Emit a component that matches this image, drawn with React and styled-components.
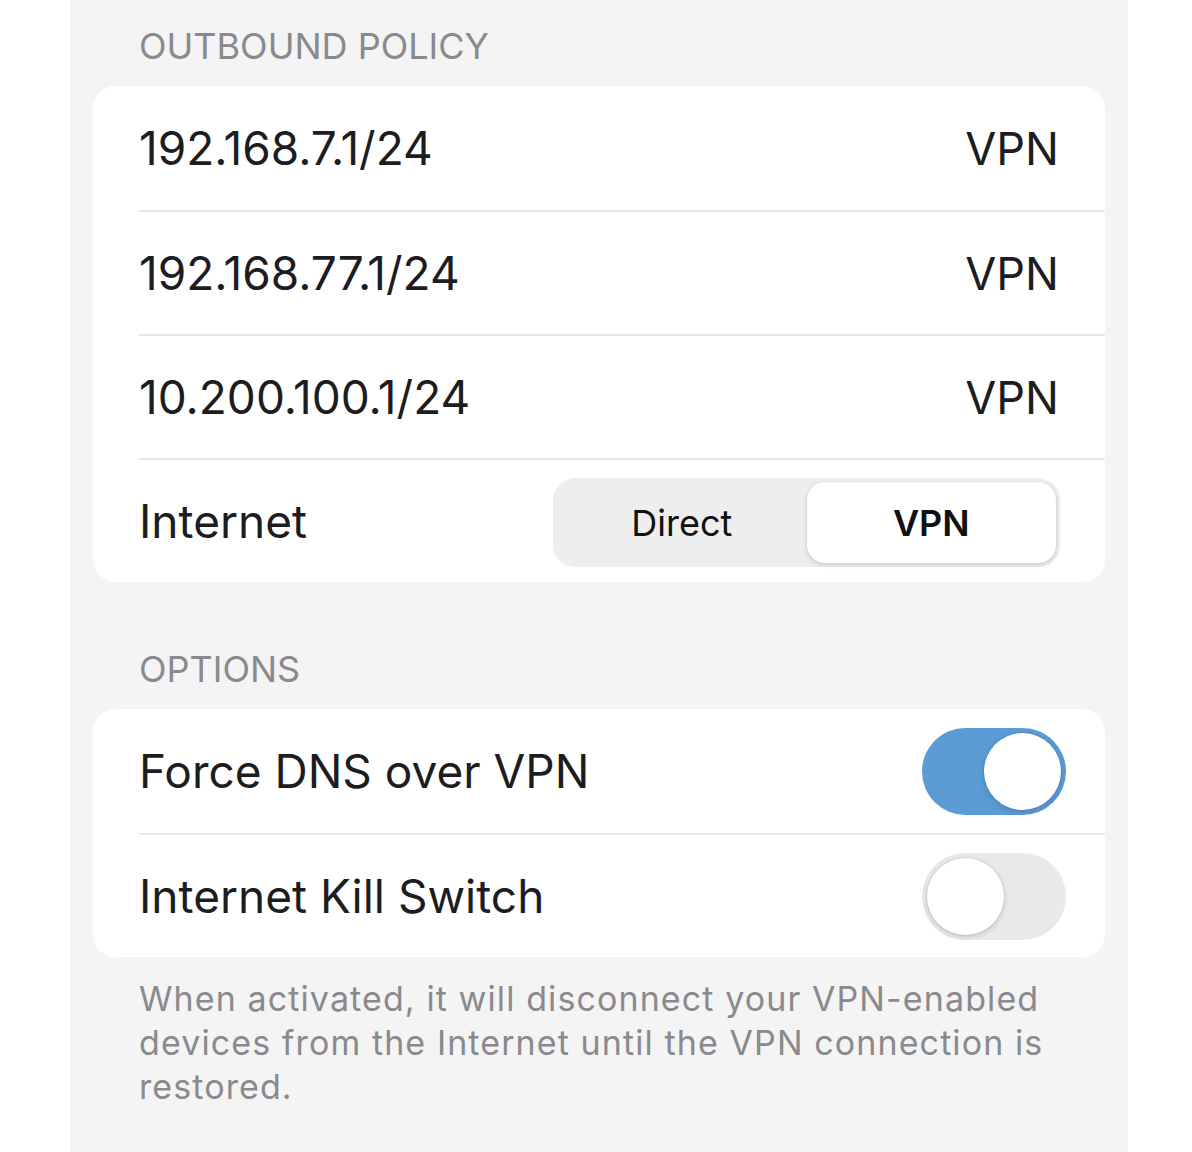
import React, { useState } from 'react';
import styled, { createGlobalStyle } from 'styled-components';

const GlobalStyle = createGlobalStyle`
  html, body {
    margin: 0;
    padding: 0;
    background: #ffffff;
  }
  body {
    font-family: Inter, "Liberation Sans", Arial, sans-serif;
    -webkit-font-smoothing: antialiased;
  }
`;

const Page = styled.div`
  width: 1058px;
  min-height: 1152px;
  margin-left: 70px;
  background-color: #f4f4f4;
  padding: 24px 23px 0;
  box-sizing: border-box;
`;

const SectionHeader = styled.div`
  font-size: 36px;
  line-height: 44px;
  color: #8a8a8e;
  text-transform: uppercase;
  padding-left: 46px;
  margin-bottom: 18px;
  margin-top: ${p => (p.$first ? '0' : '65px')};
`;

const Card = styled.div`
  background-color: #ffffff;
  border-radius: 22px;
  overflow: hidden;
`;

const Row = styled.div`
  height: 124px;
  display: flex;
  align-items: center;
  justify-content: space-between;
  margin-left: 46px;
  padding-right: 46px;
  box-sizing: border-box;
  border-top: ${p => (p.$first ? 'none' : '2px solid #e8e8ec')};
`;

const RowLabel = styled.span`
  font-size: 46px;
  color: #1d1d1f;
`;

const RowValue = styled.span`
  font-size: 45px;
  color: #1d1d1f;
`;

const Segmented = styled.div`
  display: grid;
  grid-template-columns: 1fr 1fr;
  width: 507px;
  height: 89px;
  margin-right: -1px;
  margin-top: 3px;
  padding: 4px;
  box-sizing: border-box;
  background-color: #eeeeef;
  border-radius: 22px;
`;

const Segment = styled.button`
  border: none;
  font-family: inherit;
  font-size: 36px;
  color: #111;
  font-weight: ${p => (p.$active ? 600 : 400)};
  background-color: ${p => (p.$active ? '#ffffff' : 'transparent')};
  border-radius: 18px;
  box-shadow: ${p => (p.$active ? '0 2px 5px rgba(0,0,0,0.14), 0 0 0 1px rgba(0,0,0,0.03)' : 'none')};
  cursor: pointer;
  padding: 0;
`;

const Toggle = styled.button`
  position: relative;
  width: 144px;
  height: 87px;
  border: none;
  padding: 0;
  border-radius: 44px;
  margin-right: -7px;
  background-color: ${p => (p.$on ? '#5b9bd6' : '#e9e9ea')};
  cursor: pointer;
`;

const Knob = styled.span`
  position: absolute;
  top: 5px;
  left: ${p => (p.$on ? '62px' : '5px')};
  width: 77px;
  height: 77px;
  border-radius: 50%;
  background-color: #ffffff;
  box-shadow: 0 2px 6px rgba(0,0,0,0.15), 0 0 0 1px rgba(0,0,0,0.06);
`;

const Footnote = styled.p`
  margin: 20px 0 0;
  padding: 0 40px 0 46px;
  font-size: 34px;
  letter-spacing: 1.1px;
  line-height: 44px;
  color: #8a8a8e;
`;

const routes = [
  { cidr: '192.168.7.1/24', via: 'VPN' },
  { cidr: '192.168.77.1/24', via: 'VPN' },
  { cidr: '10.200.100.1/24', via: 'VPN' },
];

export default function App() {
  const [internet, setInternet] = useState('VPN');
  const [forceDns, setForceDns] = useState(true);
  const [killSwitch, setKillSwitch] = useState(false);

  return (
    <>
      <GlobalStyle />
      <Page>
        <SectionHeader $first>Outbound Policy</SectionHeader>
        <Card>
          {routes.map((r, i) => (
            <Row key={r.cidr} $first={i === 0}>
              <RowLabel>{r.cidr}</RowLabel>
              <RowValue>{r.via}</RowValue>
            </Row>
          ))}
          <Row>
            <RowLabel>Internet</RowLabel>
            <Segmented>
              {['Direct', 'VPN'].map(opt => (
                <Segment key={opt} $active={internet === opt} onClick={() => setInternet(opt)}>
                  {opt}
                </Segment>
              ))}
            </Segmented>
          </Row>
        </Card>

        <SectionHeader>Options</SectionHeader>
        <Card>
          <Row $first>
            <RowLabel>Force DNS over VPN</RowLabel>
            <Toggle $on={forceDns} onClick={() => setForceDns(!forceDns)}>
              <Knob $on={forceDns} />
            </Toggle>
          </Row>
          <Row>
            <RowLabel>Internet Kill Switch</RowLabel>
            <Toggle $on={killSwitch} onClick={() => setKillSwitch(!killSwitch)}>
              <Knob $on={killSwitch} />
            </Toggle>
          </Row>
        </Card>
        <Footnote>
          When activated, it will disconnect your VPN-enabled devices from the Internet until the VPN connection is restored.
        </Footnote>
      </Page>
    </>
  );
}
